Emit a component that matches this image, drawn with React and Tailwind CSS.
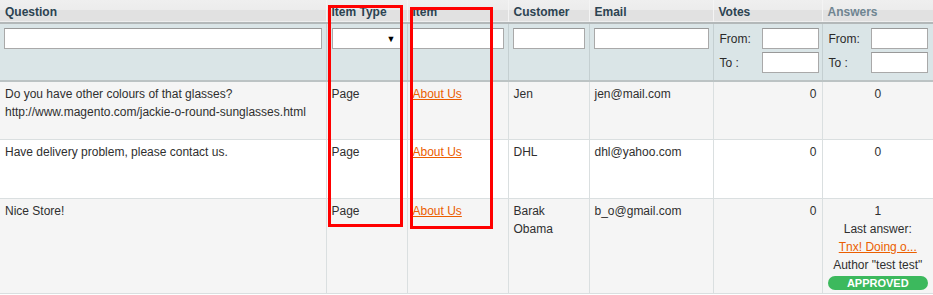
import React from 'react';

const rows = [
  {
    question: ['Do you have other colours of that glasses?', 'http://www.magento.com/jackie-o-round-sunglasses.html'],
    customer: ['Jen'],
    email: 'jen@mail.com',
    votes: 0,
    answers: 0,
    h: 'h-[58px]',
    bg: 'bg-[#f5f5f5]',
  },
  {
    question: ['Have delivery problem, please contact us.'],
    customer: ['DHL'],
    email: 'dhl@yahoo.com',
    votes: 0,
    answers: 0,
    h: 'h-[59px]',
    bg: 'bg-white',
  },
  {
    question: ['Nice Store!'],
    customer: ['Barak', 'Obama'],
    email: 'b_o@gmail.com',
    votes: 0,
    answers: 1,
    last: true,
    h: 'h-[95px]',
    bg: 'bg-[#f5f5f5]',
  },
];

const th = 'px-[5px] pt-[2px] text-left font-bold text-[12px] border-r border-[#f4f4f4] last:border-r-0';
const td = 'align-top px-[5px] pt-[3px] border-r border-[#dadfe0] last:border-r-0';
const input = 'block h-[21px] bg-white border border-[#a9a9a9] border-t-[#999]';

const Range = () => (
  <div className="flex flex-col gap-[3px] pl-[1px]">
    <div className="flex items-center justify-between">
      <span>From:</span>
      <div className={`${input} w-[57px]`} />
    </div>
    <div className="flex items-center justify-between">
      <span>To :</span>
      <div className={`${input} w-[57px]`} />
    </div>
  </div>
);

const App = () => {
  return (
    <div className="relative w-[933px] h-[295px] bg-white overflow-hidden text-[12px] leading-[18px] text-[#2f2f2f] font-['Liberation_Sans',Arial,sans-serif]">
      <table className="w-[933px] table-fixed border-collapse">
        <colgroup>
          <col className="w-[326px]" />
          <col className="w-[81px]" />
          <col className="w-[101px]" />
          <col className="w-[81px]" />
          <col className="w-[124px]" />
          <col className="w-[109px]" />
          <col className="w-[111px]" />
        </colgroup>
        <thead>
          <tr className="h-[23px] text-[#2c4351] border-b-2 border-[#b3b8b9] bg-[linear-gradient(to_bottom,#efefef_0px,#ececec_10px,#e1e1e1_10px,#e1e1e1_100%)]">
            <th className={th}>Question</th>
            <th className={th}>Item Type</th>
            <th className={th}>Item</th>
            <th className={th}>Customer</th>
            <th className={th}>Email</th>
            <th className={th}>Votes</th>
            <th className={`${th} text-[#6f8591]`}>Answers</th>
          </tr>
          <tr className="h-[58px] bg-[#dae5e7] border-b-2 border-[#bcc3c4] text-[#2a2a2a]">
            <td className="align-top px-[4px] pt-[4px] border-r border-[#c4cfd1]">
              <div className={`${input} w-full`} />
            </td>
            <td className="align-top px-[5px] pt-[4px] border-r border-[#c4cfd1]">
              <div className={`${input} w-full flex items-center justify-end pr-[5px] text-[9px] text-black`}>▼</div>
            </td>
            <td className="align-top px-[4px] pt-[4px] border-r border-[#c4cfd1]">
              <div className={`${input} w-full`} />
            </td>
            <td className="align-top px-[4px] pt-[4px] border-r border-[#c4cfd1]">
              <div className={`${input} w-full`} />
            </td>
            <td className="align-top px-[4px] pt-[4px] border-r border-[#c4cfd1]">
              <div className={`${input} w-full`} />
            </td>
            <td className="align-top pl-[5px] pr-[3px] pt-[4px] border-r border-[#c4cfd1]">
              <Range />
            </td>
            <td className="align-top pl-[5px] pr-[5px] pt-[4px]">
              <Range />
            </td>
          </tr>
        </thead>
        <tbody>
          {rows.map((r, i) => (
            <tr key={i} className={`${r.h} ${r.bg} border-b border-[#dadfe0]`}>
              <td className={td}>
                {r.question.map((q, j) => <div key={j}>{q}</div>)}
              </td>
              <td className={td}>Page</td>
              <td className={td}>
                <a href="#" className="text-[#eb5e00] underline">About Us</a>
              </td>
              <td className={td}>
                {r.customer.map((c, j) => <div key={j}>{c}</div>)}
              </td>
              <td className={td}>{r.email}</td>
              <td className={`${td} text-right`}>{r.votes}</td>
              <td className={`${td} text-center`}>
                <div>{r.answers}</div>
                {r.last && (
                  <>
                    <div>Last answer:</div>
                    <div>
                      <a href="#" className="text-[#eb5e00] underline">Tnx! Doing o...</a>
                    </div>
                    <div>Author "test test"</div>
                    <div className="mt-[2px] h-[14px] rounded-full bg-[#3cb95d] text-white font-bold text-[11px] leading-[14px]">
                      APPROVED
                    </div>
                  </>
                )}
              </td>
            </tr>
          ))}
        </tbody>
      </table>

      <div className="absolute left-[328px] top-[5px] w-[75px] h-[222px] border-[3px] border-[#ff0000]" />
      <div className="absolute left-[410px] top-[7px] w-[83px] h-[222px] border-[3px] border-[#ff0000]" />
    </div>
  );
};

export default App;
